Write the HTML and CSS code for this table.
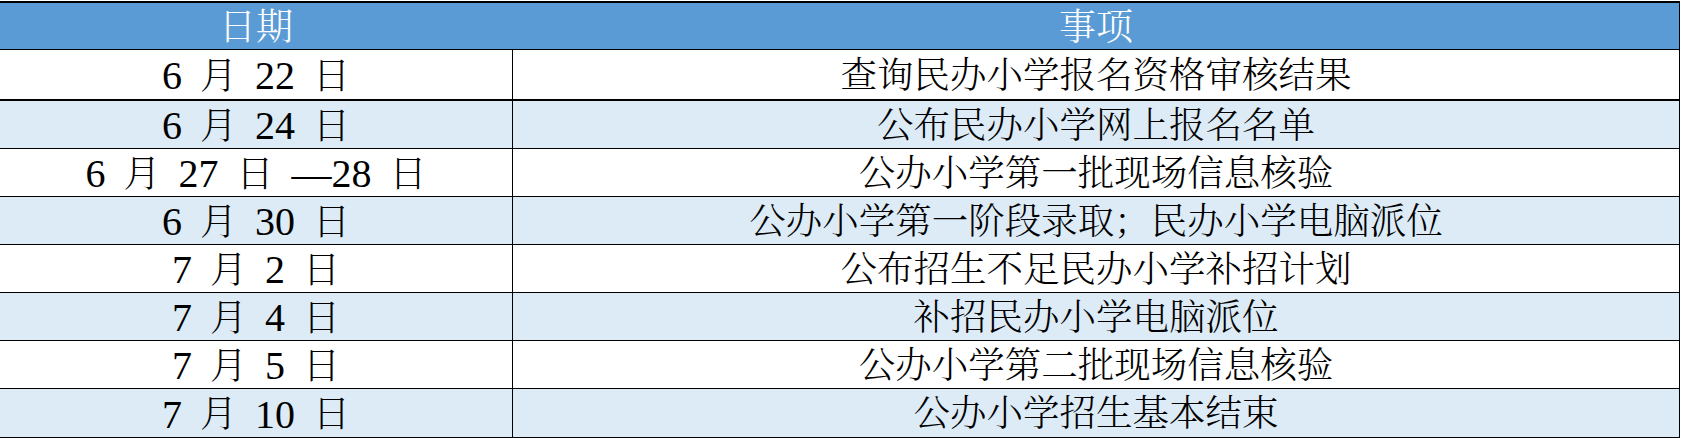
FILE: index.html
```html
<!DOCTYPE html>
<html lang="zh-CN">
<head>
<meta charset="utf-8">
<title>日期 事项</title>
<link rel="stylesheet" href="styles.css">
</head>
<body>
<div class="sheet">
  <div class="row head"><div class="c date">日期</div><div class="c item">事项</div></div>
  <div class="row first"><div class="c date"><span class="n">6</span> 月 <span class="n">22</span> 日</div><div class="c item">查询民办小学报名资格审核结果</div></div>
  <div class="row alt"><div class="c date"><span class="n">6</span> 月 <span class="n">24</span> 日</div><div class="c item">公布民办小学网上报名名单</div></div>
  <div class="row"><div class="c date"><span class="n">6</span> 月 <span class="n">27</span> 日 <span class="n">—28</span> 日</div><div class="c item">公办小学第一批现场信息核验</div></div>
  <div class="row alt"><div class="c date"><span class="n">6</span> 月 <span class="n">30</span> 日</div><div class="c item">公办小学第一阶段录取；民办小学电脑派位</div></div>
  <div class="row"><div class="c date"><span class="n">7</span> 月 <span class="n">2</span> 日</div><div class="c item">公布招生不足民办小学补招计划</div></div>
  <div class="row alt"><div class="c date"><span class="n">7</span> 月 <span class="n">4</span> 日</div><div class="c item">补招民办小学电脑派位</div></div>
  <div class="row"><div class="c date"><span class="n">7</span> 月 <span class="n">5</span> 日</div><div class="c item">公办小学第二批现场信息核验</div></div>
  <div class="row alt last"><div class="c date"><span class="n">7</span> 月 <span class="n">10</span> 日</div><div class="c item">公办小学招生基本结束</div></div>
</div>
</body>
</html>
```
FILE: styles.css
```css
html, body {
  margin: 0;
  padding: 0;
  background: #ffffff;
  overflow: hidden;
}

.sheet {
  margin-top: 1px;
  width: 1679px;
  border-top: 2px solid #000;
  border-right: 1px solid #000;
  font-family: "Liberation Serif", "Noto Serif CJK SC", "Noto Sans CJK SC", serif;
  font-size: 37px;
  font-weight: 300;
  color: #000;
}

.row {
  display: flex;
  height: 47px;
  border-bottom: 1px solid #000;
  background: #ffffff;
}

.row.head {
  height: 46px;
  background: #5b9bd5;
  color: #ffffff;
}

.row.first {
  height: 49px;
  border-bottom-width: 2px;
}

.row.alt {
  background: #ddebf7;
}

.row.last {
  height: 48px;
}

.c {
  display: flex;
  align-items: center;
  justify-content: center;
  white-space: pre;
  line-height: 1;
  padding-top: 3px;
  box-sizing: border-box;
}

.date {
  width: 513px;
  border-right: 1px solid #000;
  word-spacing: 8.75px;
}

.n {
  font-size: 40px;
  font-weight: 400;
  word-spacing: 0;
}

.head .date {
  border-right-color: transparent;
}

.item {
  flex: 1;
  font-size: 36.5px;
}

.head .item {
  font-size: 37px;
}
```
